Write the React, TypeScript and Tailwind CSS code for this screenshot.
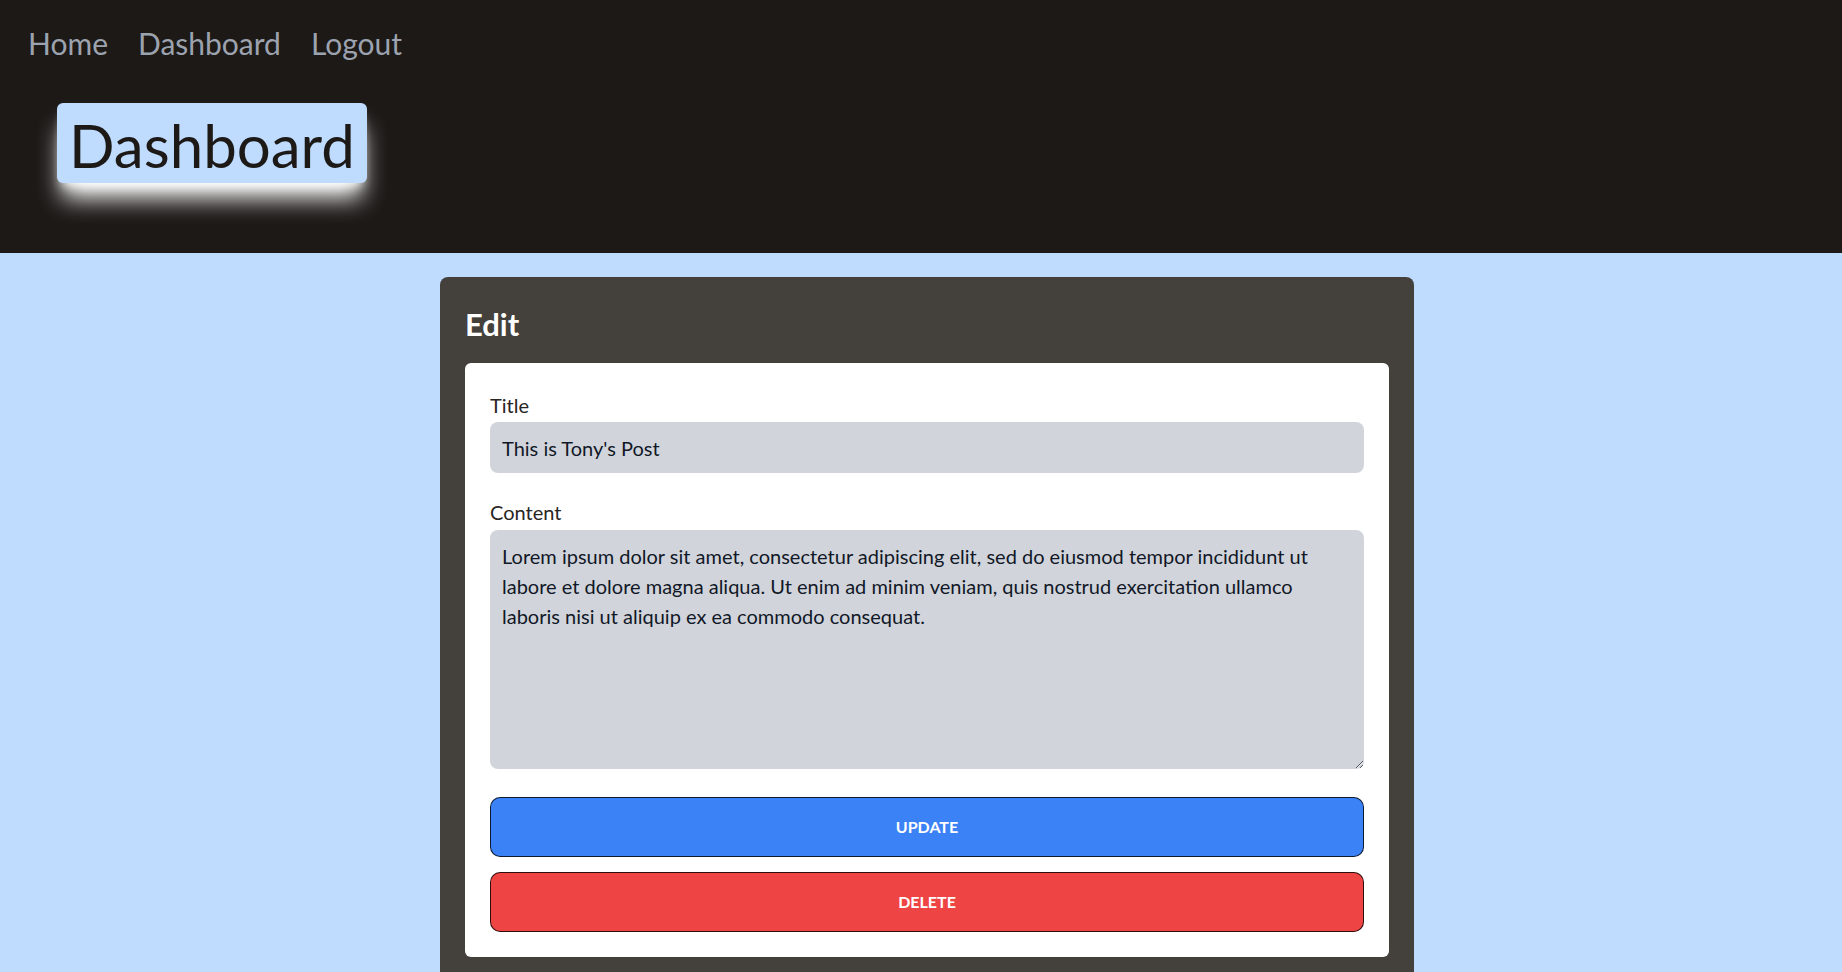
import React from "react";

const LOREM =
  "Lorem ipsum dolor sit amet, consectetur adipiscing elit, sed do eiusmod tempor incididunt ut labore et dolore magna aliqua. Ut enim ad minim veniam, quis nostrud exercitation ullamco laboris nisi ut aliquip ex ea commodo consequat.";

export default function App() {
  return (
    <div className="min-h-screen bg-[#bfdbfe] font-['Lato',sans-serif]">
      <header className="h-[253px] bg-[#1c1917]">
        <nav className="flex gap-[30px] pl-[28px] pt-[25px] text-[30px] leading-[36px] text-[#9ca3af]">
          <a href="#">Home</a>
          <a href="#">Dashboard</a>
          <a href="#">Logout</a>
        </nav>
        <div className="mt-[42px] pl-[57px]">
          <h1 className="inline-block h-[80px] rounded-md bg-[#bfdbfe] px-3 pt-[4px] text-[60px] leading-[76px] text-[#1c1917] shadow-xl shadow-white">
            Dashboard
          </h1>
        </div>
      </header>
      <main className="flex justify-center pl-[12px] pt-[24px]">
        <section className="w-[974px] rounded-t-lg bg-[#44403c] px-[25px] pb-[25px] pt-[29px]">
          <h2 className="mb-[21px] text-[31px] font-bold leading-[36px] text-white">Edit</h2>
          <form className="flex flex-col rounded-md bg-white px-[25px] pb-[25px] pt-[28px]">
            <label className="mb-[3px] text-[20px] leading-[28px] text-[#292524]">Title</label>
            <input
              className="h-[51px] rounded-lg bg-[#d1d5db] px-3 text-[20px] leading-[28px] text-[#111827] outline-none"
              defaultValue="This is Tony's Post"
            />
            <label className="mb-[4px] mt-[25px] text-[20px] leading-[28px] text-[#292524]">Content</label>
            <textarea
              className="h-[239px] rounded-lg bg-[#d1d5db] px-3 pb-3 pt-[11px] text-[20px] leading-[30px] text-[#111827] outline-none"
              defaultValue={LOREM}
            />
            <button
              type="button"
              className="mt-[28px] h-[60px] rounded-[10px] border border-black/80 bg-[#3b82f6] text-[16px] font-bold text-white"
            >
              UPDATE
            </button>
            <button
              type="button"
              className="mt-[15px] h-[60px] rounded-[10px] border border-black/80 bg-[#ef4444] text-[16px] font-bold text-white"
            >
              DELETE
            </button>
          </form>
        </section>
      </main>
    </div>
  );
}
